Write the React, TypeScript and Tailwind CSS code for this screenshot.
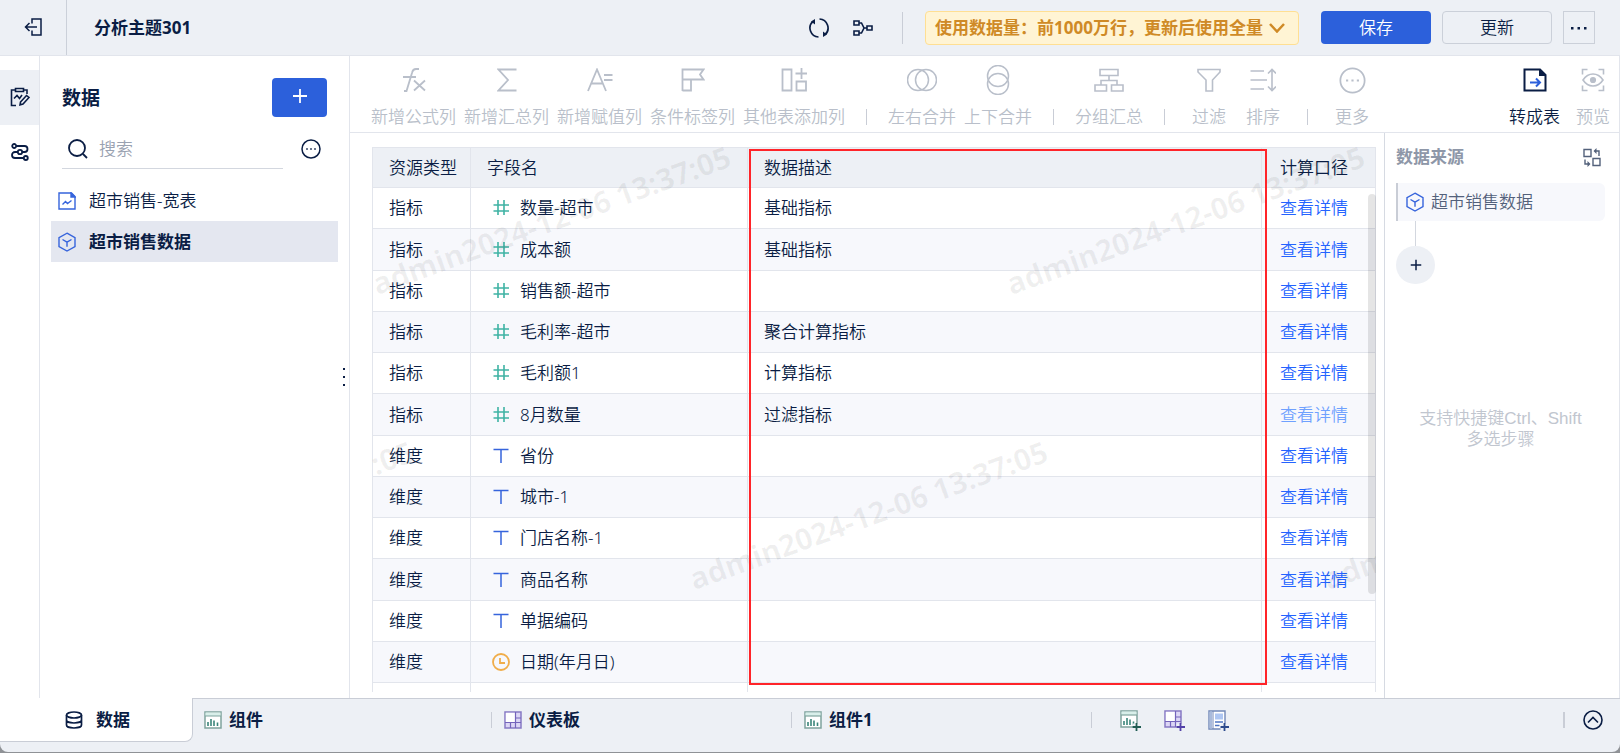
import type { ReactNode } from "react";

// --- Data ---
type FieldKind = "number" | "text" | "date";

interface Field {
  type: string;
  kind: FieldKind;
  name: string;
  desc?: string;
  faded?: boolean;
}

const fields: Field[] = [
  { type: "指标", kind: "number", name: "数量-超市", desc: "基础指标" },
  { type: "指标", kind: "number", name: "成本额", desc: "基础指标" },
  { type: "指标", kind: "number", name: "销售额-超市" },
  { type: "指标", kind: "number", name: "毛利率-超市", desc: "聚合计算指标" },
  { type: "指标", kind: "number", name: "毛利额1", desc: "计算指标" },
  { type: "指标", kind: "number", name: "8月数量", desc: "过滤指标", faded: true },
  { type: "维度", kind: "text", name: "省份" },
  { type: "维度", kind: "text", name: "城市-1" },
  { type: "维度", kind: "text", name: "门店名称-1" },
  { type: "维度", kind: "text", name: "商品名称" },
  { type: "维度", kind: "text", name: "单据编码" },
  { type: "维度", kind: "date", name: "日期(年月日)" },
];

const watermarks = [
  "left-[7px] top-[121px]",
  "left-[641px] top-[121px]",
  "left-[-310px] top-[416px]",
  "left-[324px] top-[416px]",
  "left-[958px] top-[416px]",
];

// --- Icons ---
function Icon({ w = 20, h = 20, sw = 2, children }: { w?: number; h?: number; sw?: number; children: ReactNode }) {
  return (
    <svg width={w} height={h} viewBox={`0 0 ${w} ${h}`} fill="none" stroke="currentColor" strokeWidth={sw} className="shrink-0" aria-hidden="true">
      {children}
    </svg>
  );
}

const BackIcon = () => (
  <Icon w={18} h={18} sw={1.5}>
    <path d="M8 5.500V1h9v16H8v-4.500M13 9H1.500M5.500 5 1.500 9l4 4" />
  </Icon>
);

const RefreshIcon = () => (
  <Icon sw={1.7}>
    <path d="M9.500 19A9 9 0 0 1 4 3.300M10.500 1A9 9 0 0 1 16 16.700" />
    <path d="M6 1v5.500L2 3.500zM14 19v-5.500l4 3z" fill="currentColor" stroke="none" />
  </Icon>
);

const BranchIcon = () => (
  <Icon w={20} h={16} sw={1.6}>
    <path d="M1 1h5v4H1zM1 11h5v4H1zM14 6h5v4h-5zM6 3h2.500l2.500 5-2.500 5H6M11 8h3" />
  </Icon>
);

const ClipboardIcon = () => (
  <Icon w={20} h={20} sw={1.6}>
    <path d="M5.500 3H1.500v15.500H6M13.500 3h3.500v4M5.500 1.500h8v3h-8zM4 11.500l3-3 2.500 3L12 8" />
    <path d="m10.500 15 6-6.500 2.500 2-6 6.500-3 .8z" />
  </Icon>
);

const FlowIcon = () => (
  <Icon w={18} h={18} sw={1.8}>
    <circle cx="3.200" cy="3" r="2" />
    <circle cx="9" cy="9" r="2.200" />
    <circle cx="14.800" cy="15" r="2" />
    <path d="M5.200 3h8.300a3 3 0 0 1 0 6h-2.300M6.800 9H4a3 3 0 0 0 0 6h8.800" />
  </Icon>
);

const SearchIcon = () => (
  <Icon sw={1.8}>
    <circle cx="9" cy="9" r="8" />
    <path d="m15 15 4 4" />
  </Icon>
);

const MoreCircle = ({ size = 20, sw = 1.5 }: { size?: number; sw?: number }) => (
  <svg width={size} height={size} viewBox="0 0 20 20" fill="none" stroke="currentColor" strokeWidth={sw} aria-hidden="true">
    <circle cx="10" cy="10" r="9" />
    <path d="M5.200 10h1.600M9.200 10h1.600M13.200 10h1.600" strokeWidth="1.600" />
  </svg>
);

const SheetIcon = () => (
  <Icon w={18} h={18} sw={1.4}>
    <path d="M1 1h12.500L17 4.500V17H1z" />
    <path d="M13 1v4h4z" fill="currentColor" />
    <path d="m4.500 12.500 3-3 2 2 4-3" />
  </Icon>
);

const CubeIcon = () => (
  <Icon w={18} h={20} sw={1.4}>
    <path d="m9 1.200 8 4.500v8.800L9 19l-8-4.500V5.700zM4.500 7.500 9 10.200l4.500-2.700M9 10.200v4.500" />
  </Icon>
);

const DatabaseIcon = () => (
  <Icon w={18} h={18} sw={1.7}>
    <ellipse cx="9" cy="4" rx="7.500" ry="3" />
    <path d="M1.500 4v10c0 1.700 3.400 3 7.500 3s7.500-1.300 7.500-3V4M1.500 9c0 1.700 3.400 3 7.500 3s7.500-1.300 7.500-3" />
  </Icon>
);

const Plus = ({ size, sw }: { size: number; sw: number }) => (
  <svg width={size} height={size} viewBox="0 0 16 16" fill="none" stroke="currentColor" strokeWidth={sw} aria-hidden="true">
    <path d="M8 1v14M1 8h14" />
  </svg>
);

const SwapIcon = () => (
  <Icon w={18} h={19} sw={1.4}>
    <path d="M1 1.500h7v7H1zM10 10.500h7v7h-7zM12 3h4v5M2 11.500V16h4" />
    <path d="M13.500 0v6L10.500 3zM4.500 13v6l3-3z" fill="currentColor" stroke="none" />
  </Icon>
);

function ChartTabIcon({ plus }: { plus?: boolean }) {
  return (
    <svg width={plus ? 21 : 18} height={plus ? 21 : 18} viewBox={plus ? "0 0 21 21" : "0 0 18 18"} fill="none" aria-hidden="true">
      <path d="M1 1h16v16H1z" fill="#fff" stroke="#7fa39d" strokeWidth="1.500" />
      <path d="M1.500 1.500h15V5h-15z" fill="#d9efea" />
      <path d="M1 5h16" stroke="#7fa39d" strokeWidth="1.200" />
      <path d="M4 15v-4M7 15V8M10 15v-5.500M13.500 15v-3.500" stroke="#3a857a" strokeWidth="1.600" />
      {plus && (
        <>
          <path d="M12.500 13.500H21V21h-8.500z" fill="#edf0f5" />
          <path d="M16.500 13v8M12.500 17H21" stroke="#1f5c52" strokeWidth="1.800" />
        </>
      )}
    </svg>
  );
}

function DashboardTabIcon({ plus }: { plus?: boolean }) {
  return (
    <svg width={plus ? 21 : 18} height={plus ? 21 : 18} viewBox={plus ? "0 0 21 21" : "0 0 18 18"} fill="none" aria-hidden="true">
      <path d="M1 1h16v16H1z" fill="#dcd6f5" stroke="#8779c4" strokeWidth="1.500" />
      <path d="M1.800 1.800H11V11H1.800z" fill="#fff" />
      <path d="M11.500 1v10.500H1M11.500 7H17M11.500 11.500H17M6.500 11.500V17M11.500 11.500V17" stroke="#7464bb" strokeWidth="1.200" />
      {plus && (
        <>
          <path d="M12.500 13.500H21V21h-8.500z" fill="#edf0f5" />
          <path d="M16.500 13v8M12.500 17H21" stroke="#5341a8" strokeWidth="1.800" />
        </>
      )}
    </svg>
  );
}

const ReportAddIcon = () => (
  <svg width="21" height="21" viewBox="0 0 21 21" fill="none" aria-hidden="true">
    <path d="M1 1h16v18H1z" fill="#fff" stroke="#7288b8" strokeWidth="1.400" />
    <path d="M1.500 1.500H4v17H1.500z" fill="#a9badb" />
    <path d="M5 1v18" stroke="#7288b8" />
    <path d="M7 3.500h8v6H7z" fill="#aec6f2" />
    <path d="M7 12h8M7 15.500h4.500" stroke="#4f75c2" strokeWidth="1.600" />
    <path d="M12.500 13.500H21V21h-8.500z" fill="#edf0f5" />
    <path d="M16.500 13v8M12.500 17H21" stroke="#2c4a8c" strokeWidth="1.800" />
  </svg>
);

function FieldIcon({ kind }: { kind: FieldKind }) {
  if (kind === "number") {
    return (
      <span className="text-[#3fb3a4]">
        <Icon w={18} h={18} sw={1.6}>
          <path d="M6 1v15M12 1v15M1.500 6h15.500M1.500 12h15.500" />
        </Icon>
      </span>
    );
  }
  if (kind === "text") {
    return (
      <span className="text-[#3664dc]">
        <Icon w={18} h={18} sw={1.5}>
          <path d="M1.500 2.500h15M9 2.500V16" />
        </Icon>
      </span>
    );
  }
  return (
    <span className="text-[#f0ad4a]">
      <Icon w={18} h={18} sw={1.8}>
        <circle cx="9" cy="9" r="8" />
        <path d="M8 5v5h5" />
      </Icon>
    </span>
  );
}

// --- Toolbar ---
const toolGroups: { label: string; icon: ReactNode }[][] = [
  [
    {
      label: "新增公式列",
      icon: (
        <Icon w={24} h={24} sw={1.8}>
          <path d="M17 1h-3c-2.500 0-3.300 1-3.800 3.200L4.500 23H2M1 9h13M12 12.500l11 10M23 12.500l-11 10" />
        </Icon>
      ),
    },
    {
      label: "新增汇总列",
      icon: (
        <Icon w={20} h={24} sw={1.8}>
          <path d="M19.500 1.500h-18L11 12 1.500 22.500h18" />
        </Icon>
      ),
    },
    {
      label: "新增赋值列",
      icon: (
        <Icon w={26} h={24} sw={1.8}>
          <path d="m1 23 9-21.500L19 23M4 15.500h12M17 7h8.500M17 12h8.500" />
        </Icon>
      ),
    },
    {
      label: "条件标签列",
      icon: (
        <Icon w={24} h={24} sw={1.8}>
          <path d="M1.500 23V1.500h21L19 6.500l3.500 5h-21M10 11.500v11H1.500" />
        </Icon>
      ),
    },
    {
      label: "其他表添加列",
      icon: (
        <Icon w={26} h={24} sw={1.8}>
          <path d="M1.500 1.500h9v21h-9zM15.500 13.500H25v9h-9.500zM14.500 5.500H26M20.500 0v11" />
        </Icon>
      ),
    },
  ],
  [
    {
      label: "左右合并",
      icon: (
        <Icon w={30} h={24} sw={1.5}>
          <circle cx="11" cy="12" r="10.500" />
          <circle cx="19" cy="12" r="10.500" />
        </Icon>
      ),
    },
    {
      label: "上下合并",
      icon: (
        <Icon w={24} h={30} sw={1.5}>
          <circle cx="12" cy="11" r="10.500" />
          <circle cx="12" cy="19" r="10.500" />
        </Icon>
      ),
    },
  ],
  [
    {
      label: "分组汇总",
      icon: (
        <Icon w={30} h={24} sw={1.6}>
          <path d="M6 1.500h18v6H6zM1 17h11.500v6H1zM17.500 17H29v6H17.500zM15 7.500v5M7 17v-4.500h16V17" />
        </Icon>
      ),
    },
  ],
  [
    {
      label: "过滤",
      icon: (
        <Icon w={24} h={24} sw={1.6}>
          <path d="M1 1.500h22V4l-7.500 8v11H9V12L1 4z" />
        </Icon>
      ),
    },
    {
      label: "排序",
      icon: (
        <Icon w={26} h={24} sw={1.6}>
          <path d="M.5 3H14M.5 12H17M.5 21H14M22 1.500v21M18 5.500l4-4 4 4M18 18.500l4 4 4-4" />
        </Icon>
      ),
    },
  ],
  [{ label: "更多", icon: <MoreCircle size={27} sw={1.3} /> }],
];

function Tool({ label, icon, active }: { label: string; icon: ReactNode; active?: boolean }) {
  return (
    <button className={`flex flex-col items-center ${active ? "text-[#0a1d44]" : "text-[#b9bfca]"}`}>
      <span className="flex h-[30px] items-center">{icon}</span>
      <span className="mt-[10px] text-[17px] leading-6 whitespace-nowrap">{label}</span>
    </button>
  );
}

const Divider = () => <span className="mb-1 h-4 w-px bg-[#c9cdd6]" />;

export default function App() {
  return (
    <div className="flex h-screen flex-col overflow-hidden bg-[#8f9296] font-['Noto_Sans','Noto_Sans_CJK_SC',sans-serif] text-[17px] leading-6 font-[350] text-[#0a1d44]">
      <div className="mb-px flex min-h-0 flex-1 flex-col overflow-hidden rounded-b-lg bg-[#edf0f5]">
        {/* Top bar */}
        <header className="flex h-14 shrink-0 items-center border-b border-[#e2e5ec] pr-[25px]">
          <button aria-label="返回" className="flex h-full w-[67px] items-center justify-center border-r border-[#cbd0d9] pb-0.5">
            <BackIcon />
          </button>
          <h1 className="ml-[27px] flex-1 font-bold">分析主题301</h1>
          <button aria-label="刷新"><RefreshIcon /></button>
          <button aria-label="血缘" className="ml-6"><BranchIcon /></button>
          <span className="ml-[29px] h-8 w-px bg-[#c9cdd6]" />
          <button className="ml-[22px] flex h-[34px] items-center gap-[6px] rounded-sm border border-[#ffdf93] bg-[#fff4d4] pr-[13px] pl-[9px] font-bold text-[#cf8a26]">
            使用数据量：前1000万行，更新后使用全量
            <Icon w={16} h={10} sw={2.5}>
              <path d="m1 1 7 7.500L15 1" />
            </Icon>
          </button>
          <button className="ml-[22px] h-[33px] w-[110px] rounded-sm bg-[#2c60db] text-white">保存</button>
          <button className="ml-[11px] h-[33px] w-[110px] rounded-sm border border-[#cbd0d9]">更新</button>
          <button aria-label="更多操作" className="ml-[11px] flex h-[33px] w-8 items-center justify-center border border-[#cbd0d9]">
            <svg width="16" height="4" viewBox="0 0 16 4" fill="currentColor">
              <path d="M0 1h2.500v2.500H0zM6.500 1H9v2.500H6.500zM13 1h2.500v2.500H13z" />
            </svg>
          </button>
        </header>

        <div className="flex min-h-0 flex-1 bg-white">
          {/* Icon rail */}
          <nav className="flex w-10 shrink-0 flex-col border-r border-[#e2e5ec] pt-[14px]">
            <button aria-label="数据编辑" className="flex h-[55px] items-center justify-center bg-[#edf0f5] pb-0.5"><ClipboardIcon /></button>
            <button aria-label="数据流" className="flex h-[55px] items-center justify-center pb-0.5"><FlowIcon /></button>
          </nav>

          {/* Dataset list */}
          <aside className="relative w-[310px] shrink-0 border-r border-[#e2e5ec] pt-[22px]">
            <div className="flex items-center justify-between px-[22px]">
              <h2 className="text-[19px] font-bold">数据</h2>
              <button aria-label="新增" className="flex h-[39px] w-[55px] items-center justify-center rounded-sm bg-[#2c60db] pb-1 text-white">
                <Plus size={16} sw={1.8} />
              </button>
            </div>
            <div className="mt-3 flex items-center justify-between pr-7 pl-[22px]">
              <label className="flex h-10 w-[221px] items-center gap-[11px] border-b border-[#d3d7df] pl-1.5">
                <SearchIcon />
                <input placeholder="搜索" aria-label="搜索" className="w-full min-w-0 outline-none placeholder:text-[#9aa2b1]" />
              </label>
              <button aria-label="更多"><MoreCircle /></button>
            </div>
            <ul className="mt-[11px] px-[11px]">
              <li>
                <a href="#wide" className="flex h-[41px] items-center gap-[13px] pl-[7px]">
                  <span className="text-[#3664dc]"><SheetIcon /></span>超市销售-宽表
                </a>
              </li>
              <li>
                <a href="#data" className="flex h-[41px] items-center gap-[13px] bg-[#e4e7f0] pl-[7px] font-bold">
                  <span className="text-[#3664dc]"><CubeIcon /></span>超市销售数据
                </a>
              </li>
            </ul>
            <div className="absolute top-[312px] right-1 flex flex-col gap-1.5">
              <span className="h-0.5 w-0.5 bg-[#0a1d44]" />
              <span className="h-0.5 w-0.5 bg-[#0a1d44]" />
              <span className="h-0.5 w-0.5 bg-[#0a1d44]" />
            </div>
          </aside>

          <div className="flex min-w-0 flex-1 flex-col border-r border-[#e2e5ec]">
            {/* Toolbar */}
            <div className="flex h-[77px] shrink-0 items-end justify-between border-b border-[#e2e5ec] pr-[9px] pb-[3px] pl-[21px]">
              <div className="flex items-end">
                {toolGroups.map((group, i) => (
                  <div key={i} className="flex items-end">
                    {i > 0 && <span className="mx-[21px] flex"><Divider /></span>}
                    <div className={`flex items-end ${i > 2 ? "gap-5 px-[6px]" : "gap-2"}`}>
                      {group.map((t) => <Tool key={t.label} {...t} />)}
                    </div>
                  </div>
                ))}
              </div>
              <div className="flex gap-4">
                <Tool
                  active
                  label="转成表"
                  icon={
                    <Icon w={24} h={24} sw={2}>
                      <path d="M1.500 1.500H17l5.500 5.500v15.500h-21z" />
                      <path d="M16 1v7h7z" fill="currentColor" stroke="none" />
                      <path d="M7 14.500h9.500M13 10.500l4 4-4 4" stroke="#2c60db" />
                    </Icon>
                  }
                />
                <Tool
                  label="预览"
                  icon={
                    <Icon w={24} h={24} sw={1.6}>
                      <path d="M1.500 6.500v-5h5M17.500 1.500h5v5M22.500 17.500v5h-5M6.500 22.500h-5v-5" />
                      <path d="M2 12c2.500-3.800 6-6 10-6s7.500 2.200 10 6c-2.500 3.800-6 6-10 6S4.500 15.800 2 12z" />
                      <circle cx="12" cy="12" r="2.300" fill="currentColor" />
                    </Icon>
                  }
                />
              </div>
            </div>

            <div className="flex min-h-0 flex-1">
              {/* Field table */}
              <div className="min-w-0 flex-1 pt-[14px] pr-2 pb-[6px] pl-[22px]">
                <div className="relative h-full overflow-hidden">
                  <table className="w-full table-fixed border-separate border-spacing-0 border-t border-l border-[#e2e5ec]">
                    <colgroup>
                      <col className="w-[98px]" />
                      <col className="w-[277px]" />
                      <col />
                      <col className="w-[114px]" />
                    </colgroup>
                    <thead>
                      <tr className="h-10 bg-[#edf0f5] text-left">
                        {["资源类型", "字段名", "数据描述", "计算口径"].map((h, i) => (
                          <th key={h} className={`border-r border-b border-[#e2e5ec] font-[350] ${i === 3 ? "pl-[18px]" : "pl-4"}`}>{h}</th>
                        ))}
                      </tr>
                    </thead>
                    <tbody>
                      {fields.map((f) => (
                        <tr key={f.name} className="h-[41px] even:bg-[#f7f8fc] nth-[4n+2]:h-[42px]">
                          <td className="border-r border-b border-[#e2e5ec] pl-4">{f.type}</td>
                          <td className="border-r border-b border-[#e2e5ec] pl-[21px]">
                            <span className="flex items-center gap-[10px]">
                              <FieldIcon kind={f.kind} />
                              {f.name}
                            </span>
                          </td>
                          <td className="border-r border-b border-[#e2e5ec] pl-4">{f.desc}</td>
                          <td className="border-r border-b border-[#e2e5ec] pl-[18px]">
                            <a href="#detail" className={f.faded ? "text-[#6fa1ff]" : "text-[#2463ff]"}>查看详情</a>
                          </td>
                        </tr>
                      ))}
                      <tr className="h-[41px]">
                        {[0, 1, 2, 3].map((i) => <td key={i} className="border-r border-[#e2e5ec]" />)}
                      </tr>
                    </tbody>
                  </table>
                  {watermarks.map((pos) => (
                    <span key={pos} className={`pointer-events-none absolute origin-bottom-left -rotate-20 text-[30px] leading-8 font-bold whitespace-nowrap text-black/6 ${pos}`}>
                      admin2024-12-06 13:37:05
                    </span>
                  ))}
                  <div className="absolute top-[47px] right-0 h-[400px] w-2 rounded-full bg-black/10" />
                  {/* Highlighted column */}
                  <div className="pointer-events-none absolute top-[2px] right-[109px] left-[377px] h-[536px] border-2 border-[#ff2429]" />
                </div>
              </div>

              {/* Source steps */}
              <aside className="flex w-[235px] shrink-0 flex-col border-l border-[#d6dae2] pr-[14px] pl-[11px]">
                <div className="flex h-12 items-center justify-between pr-1">
                  <h3 className="font-bold text-[#8e97a8]">数据来源</h3>
                  <button aria-label="切换" className="text-[#53617b]"><SwapIcon /></button>
                </div>
                <button className="mt-0.5 flex h-[38px] items-center gap-[7px] rounded-r-md border-l-2 border-[#c9cdd6] bg-[#f7f8fc] pl-2 text-[#53617b]">
                  <span className="text-[#3664dc]"><CubeIcon /></span>超市销售数据
                </button>
                <span className="ml-[19px] h-[25px] w-px bg-[#d3d7df]" />
                <button aria-label="添加步骤" className="flex h-[38px] w-[39px] items-center justify-center rounded-full bg-[#edf0f5]">
                  <Plus size={12} sw={2} />
                </button>
                <p className="mt-[124px] text-center font-['Liberation_Sans','Noto_Sans_CJK_SC',sans-serif] leading-[21px] text-[#c1c6cf]">
                  支持快捷键Ctrl、Shift<br />多选步骤
                </p>
              </aside>
            </div>
          </div>
        </div>

        {/* Bottom tabs */}
        <footer className="flex h-[54px] shrink-0 items-start font-bold">
          <button className="flex h-11 w-[193px] items-center gap-[13px] rounded-br-lg border-r border-b border-[#c9cdd6] bg-white pl-[65px]">
            <DatabaseIcon />数据
          </button>
          <div className="flex h-full flex-1 items-start border-t border-[#c9cdd6] pt-[9px] pr-[17px]">
            <button className="flex w-[298px] items-center gap-[7px] pl-[11px]"><ChartTabIcon />组件</button>
            <span className="mt-1 h-4 w-px bg-[#c9cdd6]" />
            <button className="flex w-[299px] items-center gap-[7px] pl-3"><DashboardTabIcon />仪表板</button>
            <span className="mt-1 h-4 w-px bg-[#c9cdd6]" />
            <button className="flex w-[299px] items-center gap-[7px] pl-3"><ChartTabIcon />组件1</button>
            <span className="mt-1 h-4 w-px bg-[#c9cdd6]" />
            <div className="ml-7 flex h-6 flex-1 items-center gap-[23px]">
              <button aria-label="新增组件"><ChartTabIcon plus /></button>
              <button aria-label="新增仪表板"><DashboardTabIcon plus /></button>
              <button aria-label="新增报告"><ReportAddIcon /></button>
            </div>
            <span className="mt-1 h-4 w-0.5 bg-[#c9cdd6]" />
            <button aria-label="收起" className="ml-[18px] flex h-6 items-center">
              <Icon sw={1.6}>
                <circle cx="10" cy="10" r="9" />
                <path d="m5 12.500 5-5 5 5" />
              </Icon>
            </button>
          </div>
        </footer>
      </div>
    </div>
  );
}
